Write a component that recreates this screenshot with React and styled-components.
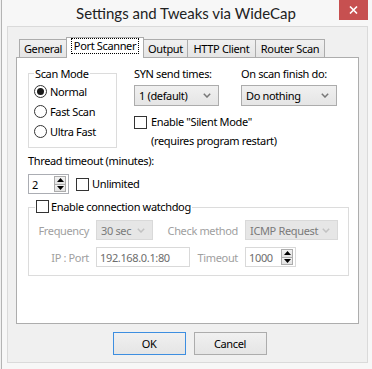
import React from 'react';
import styled, { createGlobalStyle } from 'styled-components';

const GlobalStyle = createGlobalStyle`
  html, body { margin: 0; padding: 0; background: #f7f7f7; }
  body {
    font-family: "Noto Sans", sans-serif;
    font-size: 11px;
    letter-spacing: -0.35px;
    color: #000;
  }
`;

const Window = styled.div`
  width: 372px;
  height: 369px;
  box-sizing: border-box;
  background: #f7f7f7;
  box-shadow: inset 1px 0 0 #f0f0f0, inset 2px 0 0 #b4b4b4;
  overflow: hidden;
`;

const TitleBar = styled.div`
  height: 26px;
  display: grid;
  grid-template-columns: 1fr auto 1fr;
  align-items: start;
`;

const Title = styled.div`
  grid-column: 2;
  font-family: Lato, "Noto Sans", sans-serif;
  font-size: 15px;
  letter-spacing: 0;
  line-height: 26px;
  color: #222;
  white-space: nowrap;
`;

const CloseButton = styled.div`
  grid-column: 3;
  justify-self: end;
  width: 29px;
  height: 20px;
  margin-right: 4px;
  background: #c75050;
  display: flex;
  align-items: center;
  justify-content: center;
`;

const Client = styled.div`
  margin-left: 7px;
  width: 361px;
  height: 337px;
  box-sizing: border-box;
  border: 1px solid #dadada;
  background: #f0f0f0;
  padding: 10px 8px 0 8px;
`;

const TabStrip = styled.div`
  display: flex;
  align-items: flex-end;
  height: 21px;
  padding-left: 3px;
  margin-bottom: -1px;
  position: relative;
  z-index: 1;
`;

const Tab = styled.div`
  box-sizing: border-box;
  width: ${p => p.$w}px;
  height: ${p => (p.$active ? 21 : 19)}px;
  border: 1px solid #acacac;
  border-bottom: ${p => (p.$active ? 'none' : '1px solid #acacac')};
  background: ${p => (p.$active ? '#fff' : 'linear-gradient(#f0f0f0, #e5e5e5)')};
  margin-left: ${p => (p.$first ? 0 : -1)}px;
  position: relative;
  z-index: ${p => (p.$active ? 2 : 1)};
  display: flex;
  justify-content: center;
  align-items: flex-start;
  line-height: 17px;
  white-space: nowrap;
`;

const FocusRect = styled.span`
  padding: 0 2px;
  line-height: 14px;
  border: 1px dotted #000;
`;

const Panel = styled.div`
  height: 267px;
  box-sizing: border-box;
  background: #fff;
  border: 1px solid #adadad;
  padding: 8px 9px 0 11px;
`;

const TopRow = styled.div`
  display: flex;
  align-items: flex-start;
`;

const Group = styled.fieldset`
  margin: 0;
  box-sizing: border-box;
  width: ${p => p.$w}px;
  border: 1px solid #dcdcdc;
  padding: ${p => p.$pad};
  min-width: 0;
`;

const Legend = styled.legend`
  padding: 0 1px;
  line-height: 15px;
`;

const LegendInner = styled.span`
  display: inline-flex;
  align-items: center;
  gap: 2px;
`;

const RadioRow = styled.div`
  display: flex;
  align-items: center;
  gap: 3px;
  height: 20px;
  line-height: 15px;
`;

const RadioCircle = styled.span`
  width: 13px;
  height: 13px;
  box-sizing: border-box;
  border: 1px solid #333;
  border-radius: 50%;
  background: #fff;
  display: flex;
  align-items: center;
  justify-content: center;
  &::after {
    content: '';
    width: 7px;
    height: 7px;
    border-radius: 50%;
    background: ${p => (p.$checked ? '#1a1a1a' : 'transparent')};
  }
`;

const Box = styled.span`
  width: 13px;
  height: 13px;
  box-sizing: border-box;
  border: 1px solid #333;
  background: #fff;
  flex-shrink: 0;
`;

const RightCol = styled.div`
  margin-left: 17px;
  display: flex;
  flex-direction: column;
`;

const SelectGrid = styled.div`
  display: grid;
  grid-template-columns: 85px 96px;
  column-gap: 22px;
  row-gap: 4px;
  line-height: 15px;
  white-space: nowrap;
`;

const Select = styled.div`
  box-sizing: border-box;
  width: ${p => p.$w}px;
  height: ${p => p.$h || 21}px;
  border: 1px solid ${p => (p.$disabled ? '#d9d9d9' : '#acacac')};
  background: ${p => (p.$disabled ? '#e6e6e6' : 'linear-gradient(#f0f0f0, #e5e5e5)')};
  color: ${p => (p.$disabled ? '#7a7a7a' : '#000')};
  display: flex;
  align-items: center;
  justify-content: space-between;
  padding: 0 7px 0 4px;
  white-space: nowrap;
`;

const CheckRow = styled.div`
  display: flex;
  align-items: center;
  gap: ${p => p.$gap || 4}px;
  line-height: 16px;
  margin-top: ${p => p.$mt || 0}px;
  white-space: nowrap;
`;

const Note = styled.div`
  padding-left: 17px;
  margin-top: 3px;
  line-height: 15px;
  white-space: nowrap;
`;

const Label = styled.div`
  margin-top: 5px;
  line-height: 15px;
`;

const ThreadRow = styled.div`
  margin-top: 6px;
  display: flex;
  align-items: center;
  gap: 7px;
`;

const SpinBox = styled.div`
  box-sizing: border-box;
  width: ${p => p.$w}px;
  height: 20px;
  border: 1px solid ${p => (p.$disabled ? '#d9d9d9' : '#abadb3')};
  background: #fff;
  color: ${p => (p.$disabled ? '#6d6d6d' : '#000')};
  display: flex;
  align-items: center;
  justify-content: space-between;
  padding: 0 2px 0 3px;
  line-height: 15px;
`;

const SpinButtons = styled.div`
  width: 12px;
  height: 16px;
  display: flex;
  flex-direction: column;
`;

const SpinHalf = styled.div`
  flex: 1;
  box-sizing: border-box;
  border: 1px solid #acacac;
  margin-top: ${p => (p.$down ? -1 : 0)}px;
  background: linear-gradient(#f2f2f2, #e2e2e2);
  display: flex;
  align-items: center;
  justify-content: center;
`;

const WatchRows = styled.div`
  display: flex;
  flex-direction: column;
  gap: 7px;
`;

const WatchRow = styled.div`
  display: flex;
  align-items: center;
  height: 20px;
`;

const FieldLabel = styled.div`
  color: #a0a0a0;
  white-space: nowrap;
  text-align: right;
  margin-right: 7px;
  ${p => (p.$fill ? 'flex: 1;' : `width: ${p.$w}px; flex-shrink: 0;`)}
`;

const Cell = styled.div`
  width: 93px;
  display: flex;
`;

const TextInput = styled.div`
  box-sizing: border-box;
  width: ${p => p.$w}px;
  height: 20px;
  border: 1px solid #d9d9d9;
  background: #fff;
  color: #6d6d6d;
  padding-left: 3px;
  display: flex;
  align-items: center;
`;

const ButtonRow = styled.div`
  display: flex;
  justify-content: center;
  gap: 8px;
  margin-top: 8px;
  padding-left: 4px;
`;

const Button = styled.div`
  box-sizing: border-box;
  width: 73px;
  height: 23px;
  border: 1px solid ${p => (p.$default ? '#3d8ee0' : '#acacac')};
  background: linear-gradient(#f0f0f0, #e5e5e5);
  display: flex;
  align-items: center;
  justify-content: center;
`;

const Chevron = ({ disabled }) => (
  <svg width="8" height="5" viewBox="0 0 8 5">
    <polyline points="0.8,0.8 4,4 7.2,0.8" fill="none" stroke={disabled ? '#c2c2c2' : '#777'} strokeWidth="1.5" />
  </svg>
);

const Arrow = ({ up }) => (
  <svg width="7" height="4" viewBox="0 0 7 4">
    <polygon points={up ? '0,4 3.5,0 7,4' : '0,0 7,0 3.5,4'} fill="#000" />
  </svg>
);

function Spinner() {
  return (
    <SpinButtons>
      <SpinHalf><Arrow up /></SpinHalf>
      <SpinHalf $down><Arrow /></SpinHalf>
    </SpinButtons>
  );
}

const tabs = [
  { name: 'General', w: 48 },
  { name: 'Port Scanner', w: 78, active: true },
  { name: 'Output', w: 45 },
  { name: 'HTTP Client', w: 69 },
  { name: 'Router Scan', w: 70 },
];

const modes = [
  { name: 'Normal', checked: true },
  { name: 'Fast Scan' },
  { name: 'Ultra Fast' },
];

export default function App() {
  return (
    <Window>
      <GlobalStyle />
      <TitleBar>
        <Title>Settings and Tweaks via WideCap</Title>
        <CloseButton>
          <svg width="9" height="8" viewBox="0 0 9 8">
            <path d="M1 0.5 L8 7.5 M8 0.5 L1 7.5" stroke="#fff" strokeWidth="1.6" />
          </svg>
        </CloseButton>
      </TitleBar>

      <Client>
        <TabStrip>
          {tabs.map((t, i) => (
            <Tab key={t.name} $w={t.w} $active={t.active} $first={i === 0}>
              {t.active ? <FocusRect>{t.name}</FocusRect> : t.name}
            </Tab>
          ))}
        </TabStrip>

        <Panel>
          <TopRow>
            <Group $w={89} $pad="0 0 6px 5px">
              <Legend>Scan Mode</Legend>
              {modes.map(m => (
                <RadioRow key={m.name}>
                  <RadioCircle $checked={m.checked} />
                  {m.name}
                </RadioRow>
              ))}
            </Group>

            <RightCol>
              <SelectGrid>
                <div>SYN send times:</div>
                <div>On scan finish do:</div>
                <Select $w={85}>1 (default)<Chevron /></Select>
                <Select $w={96}>Do nothing<Chevron /></Select>
              </SelectGrid>
              <CheckRow $mt={8}>
                <Box />
                Enable "Silent Mode"
              </CheckRow>
              <Note>(requires program restart)</Note>
            </RightCol>
          </TopRow>

          <Label>Thread timeout (minutes):</Label>
          <ThreadRow>
            <SpinBox $w={41}>
              2
              <Spinner />
            </SpinBox>
            <CheckRow $gap={3}>
              <Box />
              Unlimited
            </CheckRow>
          </ThreadRow>

          <Group $w={321} $pad="4px 10px 8px 6px" style={{ marginTop: 5 }}>
            <Legend>
              <LegendInner>
                <Box />
                Enable connection watchdog
              </LegendInner>
            </Legend>
            <WatchRows>
              <WatchRow>
                <FieldLabel $w={54}>Frequency</FieldLabel>
                <Select $w={57} $h={20} $disabled>30 sec<Chevron disabled /></Select>
                <FieldLabel $fill>Check method</FieldLabel>
                <Cell>
                  <Select $w={93} $h={20} $disabled>ICMP Request<Chevron disabled /></Select>
                </Cell>
              </WatchRow>
              <WatchRow>
                <FieldLabel $w={54}>IP : Port</FieldLabel>
                <TextInput $w={94}>192.168.0.1:80</TextInput>
                <FieldLabel $fill>Timeout</FieldLabel>
                <Cell>
                  <SpinBox $w={51} $disabled>
                    1000
                    <Spinner />
                  </SpinBox>
                </Cell>
              </WatchRow>
            </WatchRows>
          </Group>
        </Panel>

        <ButtonRow>
          <Button $default>OK</Button>
          <Button>Cancel</Button>
        </ButtonRow>
      </Client>
    </Window>
  );
}
